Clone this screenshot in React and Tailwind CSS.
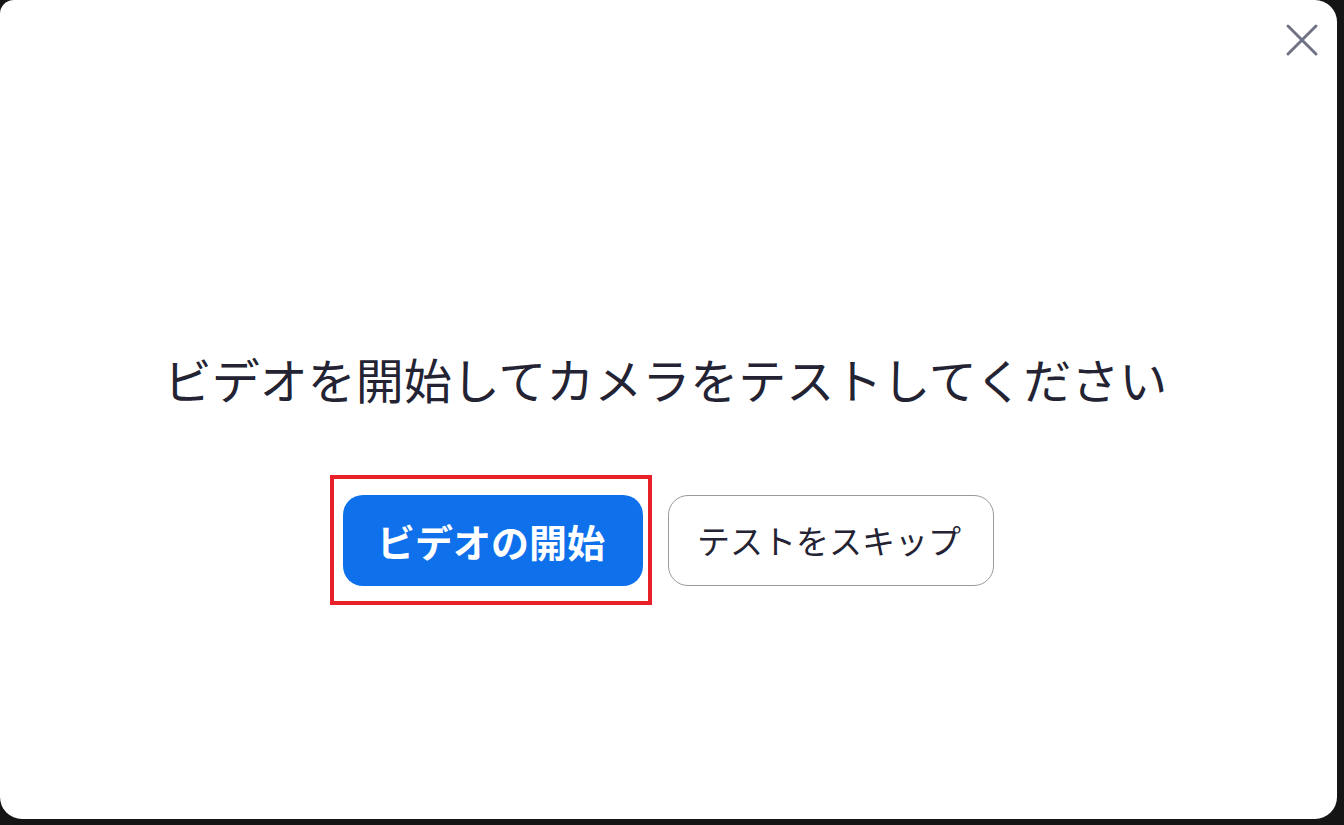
import React from "react";

export default function App() {
  return (
    <div className="w-[1344px] h-[825px] bg-[#151515] overflow-hidden" style={{ fontFamily: '"Noto Sans CJK JP", "Noto Sans", sans-serif' }}>
      <div className="relative w-[1337px] h-[819px] bg-white rounded-[22px] rounded-tl-[14px] flex flex-col items-center">
        <button className="absolute left-[1285px] top-[23px] w-[34px] h-[34px] flex items-center justify-center" aria-label="close">
          <svg width="34" height="34" viewBox="0 0 34 34">
            <path d="M3 3 L31 31 M31 3 L3 31" stroke="#6f7385" strokeWidth="3" strokeLinecap="round" fill="none" />
          </svg>
        </button>
        <h1 className="mt-[354px] text-[48px] leading-none text-[#232333] font-normal ml-[-6px]">
          ビデオを開始してカメラをテストしてください
        </h1>
        <div className="mt-[93px] flex gap-[25px] ml-[0px]">
          <div className="relative">
            <div className="absolute left-[-13px] top-[-20px] w-[322px] h-[130px] border-[4px] border-[#e8202a] pointer-events-none" />
            <button className="w-[300px] h-[91px] rounded-[20px] bg-[#0e71eb] text-white text-[38px] font-bold leading-none flex items-center justify-center">
              <span className="ml-[-4px]">ビデオの開始</span>
            </button>
          </div>
          <button className="w-[326px] h-[91px] rounded-[20px] border-[1.5px] border-[#9a9a9a] bg-white text-[#232333] text-[33px] leading-none flex items-center justify-center">
            <span className="ml-[-4px]">テストをスキップ</span>
          </button>
        </div>
      </div>
    </div>
  );
}
